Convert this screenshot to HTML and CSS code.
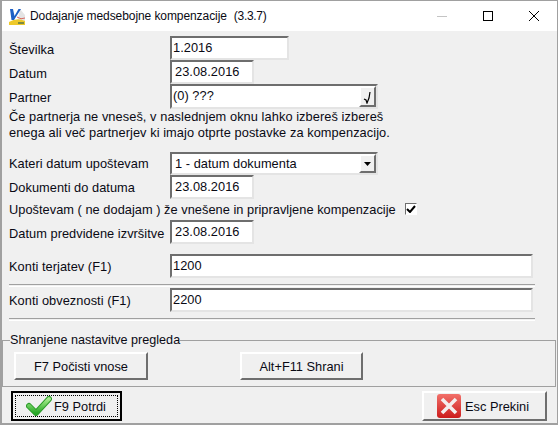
FILE: index.html
```html
<!DOCTYPE html>
<html lang="en">
<head>
  <meta charset="UTF-8">
  <title>Dodajanje medsebojne kompenzacije</title>
  <link rel="stylesheet" href="styles.css">
</head>
<body>

  <div class="window">
    <div class="titlebar">
      <svg class="app-icon" width="17" height="17" viewBox="0 0 17 17">
        <path d="M11 1l5 6v8H8z" fill="#e4e4e4"/>
        <path d="M8 9q4 3 8 1" fill="none" stroke="#d9695f"/>
        <path d="M0 14q8-5 16-1v4H0z" fill="#eec92a"/>
        <path d="M9 14h6v2H9z" fill="#7d8a40"/>
        <path d="M1 1h3l1.500 7L9.500 1H12L5 12H2.500z" fill="#1d5fc4"/>
      </svg>
      <span class="title">Dodajanje medsebojne kompenzacije</span>
      <span class="version">(3.3.7)</span>
      <div class="win-btns">
        <svg width="12" height="12" viewBox="0 0 12 12"><path d="M1 6.500h10" stroke="#c4c4c4"/></svg>
        <svg width="12" height="12" viewBox="0 0 12 12"><rect x="1.500" y="1.500" width="9" height="9" fill="none" stroke="#000"/></svg>
        <svg width="12" height="12" viewBox="0 0 12 12"><path d="M1 1l10 10M11 1L1 11" stroke="#000" fill="none"/></svg>
      </div>
    </div>

    <div class="content">
      <div class="row low">
        <label>Številka</label>
        <div class="field w-num">1.2016</div>
      </div>
      <div class="row low">
        <label>Datum</label>
        <div class="field w-date date">23.08.2016</div>
      </div>
      <div class="row row-partner low">
        <label>Partner</label>
        <div class="field w-wide with-btn">
          (0) ???
          <span class="side-btn">
            <svg width="10" height="14" viewBox="0 0 10 14"><path d="M1 9l2 1 1 3 2-5 1-6" fill="none" stroke="#000" stroke-width="1.200"/></svg>
          </span>
        </div>
      </div>
      <p class="note">Če partnerja ne vneseš, v naslednjem oknu lahko izbereš izbereš<br>enega ali več partnerjev ki imajo otprte postavke za kompenzacijo.</p>

      <div class="row row-select">
        <label>Kateri datum upoštevam</label>
        <div class="field w-wide with-btn date">
          1 - datum dokumenta
          <span class="side-btn">
            <svg width="7" height="4" viewBox="0 0 7 4"><path d="M0 0h7L3.500 4z" fill="#000"/></svg>
          </span>
        </div>
      </div>
      <div class="row">
        <label>Dokumenti do datuma</label>
        <div class="field w-date date">23.08.2016</div>
      </div>
      <div class="check-row">
        <span>Upoštevam ( ne dodajam ) že vnešene in pripravljene kompenzacije</span>
        <span class="checkbox">
          <svg width="10" height="8" viewBox="0 0 10 8"><path d="M1 4l3 3 5-6" fill="none" stroke="#000" stroke-width="2"/></svg>
        </span>
      </div>
      <div class="row low">
        <label>Datum predvidene izvršitve</label>
        <div class="field w-date date">23.08.2016</div>
      </div>

      <div class="row row-konto">
        <label>Konti terjatev (F1)</label>
        <div class="field w-full">1200</div>
      </div>
      <div class="divider"></div>
      <div class="row row-konto2">
        <label>Konti obveznosti (F1)</label>
        <div class="field w-full">2200</div>
      </div>
      <div class="divider"></div>
    </div>

    <fieldset class="group">
      <legend>Shranjene nastavitve pregleda</legend>
      <button class="btn btn-clear">F7 Počisti vnose</button>
      <button class="btn btn-save">Alt+F11 Shrani</button>
    </fieldset>

    <div class="actions">
      <button class="btn btn-ok">
        <span class="focus">
          <svg width="26" height="20" viewBox="0 0 26 20">
            <defs>
              <linearGradient id="ok" x1="0" y1="0" x2="0" y2="1">
                <stop offset="0" stop-color="#a6ec8c"/>
                <stop offset="1" stop-color="#27a826"/>
              </linearGradient>
            </defs>
            <path d="M3 10l7 7L23 3" fill="none" stroke="#2d9c2b" stroke-width="6" stroke-linecap="round" stroke-linejoin="round"/>
            <path d="M3 10l7 7L23 3" fill="none" stroke="url(#ok)" stroke-width="4" stroke-linecap="round" stroke-linejoin="round"/>
          </svg>
          F9 Potrdi
        </span>
      </button>
      <button class="btn btn-cancel">
        <svg width="24" height="24" viewBox="0 0 24 24">
          <defs>
            <linearGradient id="no" x1="0" y1="0" x2="0" y2="1">
              <stop offset="0" stop-color="#f2706a"/>
              <stop offset="1" stop-color="#cc1c1c"/>
            </linearGradient>
          </defs>
          <rect width="24" height="24" rx="3" fill="url(#no)"/>
          <path d="M5 5l14 14M19 5L5 19" stroke="#f4eeee" stroke-width="3.600"/>
        </svg>
        Esc Prekini
      </button>
    </div>
  </div>

</body>
</html>
```

FILE: styles.css
```css
* {
  margin: 0;
  padding: 0;
  box-sizing: border-box;
  font-family: 'Liberation Sans', Arial, sans-serif;
}

body {
  background: #f0f0f0;
  color: #0a0a14;
  font-size: 12.8px;
  letter-spacing: 0.04px;
}

.window {
  width: 558px;
  height: 425px;
  display: flex;
  flex-direction: column;
  background: #f0f0f0;
  border: 1px solid #a0a0a0;
  border-width: 1px 1px 2px 2px;
  overflow: hidden;
}

.titlebar {
  height: 30px;
  flex: none;
  display: flex;
  align-items: center;
  background: white;
  padding-left: 7px;
  font-size: 12px;
  letter-spacing: -0.08px;
}

.app-icon {
  margin-right: 4px;
}

.version {
  margin-left: 7px;
  letter-spacing: -0.3px;
}

.win-btns {
  margin-left: auto;
  display: flex;
  gap: 34px;
  padding-right: 17px;
}

.content {
  padding: 5px 0 0 7px;
  flex: none;
  height: 303px;
}

.row {
  display: flex;
  align-items: center;
  height: 24px;
}

.row label {
  width: 161px;
  flex: none;
}

.row.low label {
  padding-top: 2px;
}

.field {
  height: 24px;
  background: white;
  border: 2px solid;
  border-color: #6e6e6e #e4e4e4 #e4e4e4 #6e6e6e;
  padding-left: 1px;
  line-height: 20px;
}

.date {
  padding-left: 3px;
}

.w-num {
  width: 119px;
}

.w-date {
  width: 84px;
}

.w-wide {
  width: 208px;
}

.w-full {
  width: 363px;
}

.with-btn {
  position: relative;
}

.side-btn {
  position: absolute;
  right: 0;
  top: 0;
  bottom: 0;
  width: 17px;
  display: flex;
  align-items: center;
  justify-content: center;
  background: #f0f0f0;
  border: 2px solid;
  border-color: #fff #6e6e6e #6e6e6e #fff;
}

.row-partner {
  height: 25px;
}

.row-partner .field {
  height: 25px;
}

.note {
  line-height: 16px;
  height: 34px;
  letter-spacing: 0.07px;
}

.row-select {
  margin-top: 9px;
  height: 23px;
}

.row-select .field {
  height: 23px;
  line-height: 19px;
}

.check-row {
  display: flex;
  align-items: center;
  height: 21px;
  letter-spacing: 0.03px;
}

.checkbox {
  width: 12px;
  height: 12px;
  margin-left: 9px;
  margin-top: -2px;
  display: flex;
  align-items: center;
  justify-content: center;
  background: white;
  border: 1px solid;
  border-color: #6e6e6e #fff #fff #6e6e6e;
}

.row-konto {
  margin-top: 10px;
}

.row-konto2 {
  margin-top: 1px;
}

.divider {
  width: 526px;
  height: 3px;
  margin-top: 6px;
  border-top: 1px solid #a0a0a0;
  border-bottom: 1px solid #fff;
}

.group {
  flex: none;
  height: 53px;
  margin-right: 1px;
  padding: 5px 0 0 11px;
  display: flex;
  border: 1px solid #a0a0a0;
}

.group legend {
  margin-left: -4px;
  padding: 0;
  line-height: 13px;
  letter-spacing: 0;
  font-size: 12.6px;
}

.btn {
  height: 28px;
  font-size: 12.8px;
  color: #0a0a14;
  background: #f0f0f0;
  border: 2px solid;
  border-color: #fff #6e6e6e #6e6e6e #fff;
  cursor: pointer;
}

.btn-clear {
  width: 134px;
}

.btn-save {
  width: 123px;
  margin-left: 92px;
}

.actions {
  display: flex;
  justify-content: space-between;
  padding: 4px 10px 0 9px;
}

.btn-ok,
.btn-cancel {
  height: 30px;
  display: flex;
  align-items: center;
}

.btn-ok {
  width: 111px;
  border: 2px solid #000;
  padding: 2px;
}

.focus {
  flex: 1;
  height: 100%;
  display: flex;
  align-items: center;
  padding-left: 10px;
  gap: 2px;
  border: 1px dotted #000;
}

.btn-cancel {
  width: 125px;
  padding-left: 13px;
  gap: 4px;
}
```
